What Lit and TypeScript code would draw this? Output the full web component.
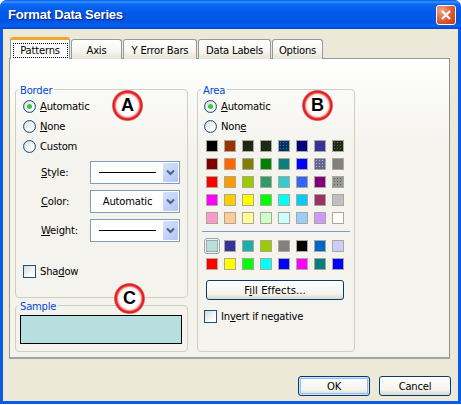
import { LitElement, html, css } from "lit";
import { customElement } from "lit/decorators.js";

type Sw = [string, string?];
const PALETTE: Sw[] = [
  ["#000000"], ["#993300"], ["#1c2a14"], ["#1c2a14"], ["#003366", "dots-blue"], ["#000080"], ["#333399"], ["#1c2a14", "dots-grey"],
  ["#800000"], ["#ff6600"], ["#808000"], ["#008000"], ["#008080", "dots-dark"], ["#0000ff"], ["#666699", "dots-light"], ["#808080"],
  ["#ff0000"], ["#ff9900"], ["#99cc00"], ["#339966"], ["#33cccc"], ["#3366ff"], ["#800080"], ["#969696", "dots-dark"],
  ["#ff00ff"], ["#ffcc00"], ["#ffff00"], ["#00ff00"], ["#00ffff"], ["#00ccff"], ["#993366"], ["#c0c0c0", "dots-light"],
  ["#ff99cc"], ["#ffcc99"], ["#ffff99"], ["#ccffcc"], ["#ccffff"], ["#99ccff"], ["#cc99ff"], ["#ffffff"],
];
const RECENT: Sw[] = [
  ["#b8dfe0", "selected"], ["#333399"], ["#008080", "dots-cyan"], ["#99cc00"], ["#808080"], ["#000000"], ["#0066cc"], ["#ccccff"],
  ["#ff0000"], ["#ffff00"], ["#00ff00"], ["#00ffff"], ["#0000ff"], ["#ff00ff"], ["#008080", "dots-dark"], ["#0000ff"],
];

@customElement("app-root")
export class AppRoot extends LitElement {
  static styles = css`
    :host {
      display: block; position: relative; width: 461px; height: 405px; background: #fff; overflow: hidden;
      font-family: "DejaVu Sans", sans-serif; font-size: 10px; letter-spacing: -0.2px; color: #000;
    }
    .window {
      box-sizing: border-box; width: 461px; height: 404px; display: flex; flex-direction: column;
      border-radius: 7px 7px 0 0; overflow: hidden; background: #0a5be8;
    }
    .titlebar {
      flex: none; height: 29px; display: flex; align-items: center; justify-content: space-between;
      padding: 0 5px 0 8px;
      background: linear-gradient(#0058e6 0, #3a93ff 2px, #0a6af2 4px, #0258e8 12px, #0055e5 22px, #0461ee 26px, #0044c8 29px);
    }
    .title {
      color: #fff; font: bold 13px "Liberation Sans", sans-serif; letter-spacing: -0.2px; text-shadow: 1px 1px 1px #0f1f7a;
    }
    .close {
      box-sizing: border-box; width: 20px; height: 20px; border: 1px solid #fff; border-radius: 3px;
      background: radial-gradient(circle at 25% 25%, #f0a488, #de5a30 55%, #c03510);
      display: flex; align-items: center; justify-content: center;
    }
    .client {
      flex: 1; margin: 0 3px 3px 3px; background: #ece9d8; padding: 8px 7px 0 6px; display: flex; flex-direction: column;
    }
    .tabs {
      display: grid; grid-template-columns: 60px 51px 74px 73px 51px; column-gap: 1px; align-items: end;
      height: 22px; margin: 0 0 -1px 1px; position: relative; z-index: 1;
    }
    .tab {
      box-sizing: border-box; height: 20px; border: 1px solid #919b9c; border-bottom: none; border-radius: 3px 3px 0 0;
      background: linear-gradient(#fff, #f6f5ef 60%, #e6e3d6);
      display: flex; align-items: center; justify-content: center; padding-top: 1px;
    }
    .tab.active {
      height: 22px; background: #fff; border: 1px solid #919b9c; border-top: 3px solid #f5a52b; border-bottom: none;
      border-radius: 3px 3px 0 0; padding: 1px 0 0 0;
    }
    .focus { outline: 1px dotted #000; padding: 0 2px; line-height: 13px; width: 49px; text-align: center; }
    .panel {
      box-sizing: border-box; width: 441px; height: 301px; border: 1px solid #919b9c;
      border-right-color: #8a9091; border-bottom: 2px solid #a0a5a5;
      background: linear-gradient(#fff 0, #fbfbf9 25px, #f4f3ee 90px);
      padding: 23px 0 0 5px; display: flex; gap: 9px; align-items: flex-start;
    }
    .col { display: flex; flex-direction: column; }
    fieldset {
      box-sizing: border-box; margin: 0; padding: 0; min-width: 0; border: 1px solid #d0d0bf; border-radius: 4px;
      display: flex; flex-direction: column;
    }
    legend { padding: 0 2px; color: #0046d5; line-height: 17px; height: 14px; }
    .border-group { width: 173px; height: 216px; padding-left: 7px; }
    .border-group legend { margin-left: -5px; }
    .sample-group { width: 173px; height: 54px; padding: 0 5px 0 4px; }
    .sample-group legend { margin-left: -2px; }
    .area-group { width: 158px; height: 270px; padding-left: 6px; }
    .area-group legend { margin-left: -3px; }
    .sample { box-sizing: border-box; height: 29px; margin-top: 3px; border: 1px solid #000; background: #b8dfe0; }
    .opt { display: flex; align-items: center; gap: 4px; height: 20px; }
    .radio {
      box-sizing: border-box; width: 13px; height: 13px; border: 1px solid #1c5180; border-radius: 50%;
      background: linear-gradient(135deg, #dcdcd7, #fff 75%); display: flex; align-items: center; justify-content: center;
      box-shadow: inset 0 0 0 0.5px #c8d4dc;
    }
    .radio.on::after { content: ""; width: 5px; height: 5px; border-radius: 50%; background: #43c343; }
    .check {
      box-sizing: border-box; width: 13px; height: 13px; border: 1px solid #1c5180;
      background: linear-gradient(135deg, #d8d8d2, #fff 75%);
    }
    .fields { margin-top: 5px; padding-left: 18px; display: flex; flex-direction: column; gap: 6px; }
    .field { display: flex; align-items: center; }
    .field label { width: 49px; flex: none; }
    .select {
      box-sizing: border-box; width: 90px; height: 23px; border: 1px solid #7f9db9; background: #fff;
      display: flex; align-items: center; padding: 1px;
    }
    .select .val { flex: 1; text-align: center; }
    .select .line { flex: 1; height: 1px; background: #000; margin: 0 7px; }
    .arrow {
      box-sizing: border-box; width: 15px; height: 19px; flex: none; background: linear-gradient(135deg, #d6e2fb, #b2c6f3);
      border-radius: 1px; display: flex; align-items: center; justify-content: center;
    }
    .shadow-row { margin-top: 19px; }
    .swatches { display: grid; grid-template-columns: repeat(8, 12px); gap: 6px; margin-left: 2px; }
    .swatches.first { margin-top: 4px; }
    .sep { height: 1px; background: #7a9dd3; margin: 7px 5px 8px -2px; width: 148px; }
    .sw { box-sizing: border-box; width: 12px; height: 12px; border: 1px solid #aca899; position: relative; }
    .selected::before {
      content: ""; position: absolute; inset: -3px; border: 1px solid #8fa6c4; border-radius: 3px;
    }
    .dots-blue { background-image: radial-gradient(#2d6fa0 0.6px, transparent 0.8px); background-size: 3px 3px; }
    .dots-grey { background-image: radial-gradient(#5f6f50 0.6px, transparent 0.8px); background-size: 3px 3px; }
    .dots-dark { background-image: radial-gradient(#3f6f70 0.7px, transparent 0.9px); background-size: 3px 3px; }
    .dots-light { background-image: radial-gradient(#b8b8c8 0.6px, transparent 0.8px); background-size: 3px 3px; }
    .dots-cyan { background-image: radial-gradient(#3ce0e0 0.6px, transparent 0.8px); background-size: 2px 2px; }
    .xpbtn {
      box-sizing: border-box; display: flex; align-items: center; justify-content: center; height: 20px;
      border: 1px solid #003c74; border-radius: 3px; background: linear-gradient(#fff, #f5f4ee 70%, #dcd8cc);
    }
    .fill { width: 138px; margin: 10px 0 0 2px; letter-spacing: 0.1px; }
    .invert { margin-top: 6px; }
    .footer { display: flex; justify-content: flex-end; gap: 9px; margin-top: 17px; }
    .footer .xpbtn { width: 72px; }
    .default { box-shadow: inset 0 0 0 1px #cee7ff, inset 0 0 0 2px #98b8ea; }
    .badge {
      position: absolute; box-sizing: border-box; width: 31px; height: 31px; border-radius: 50%;
      background: radial-gradient(circle closest-side, #fff 0, #fff 60%, #f8dcdc 72%, #e63030 84%, #dc1c1c 92%, #ec8080 100%);
      display: flex; align-items: center; justify-content: center;
      font: bold 18px "Liberation Sans", sans-serif; letter-spacing: 0; color: #000;
    }
    .a { left: 112px; top: 90px; }
    .b { left: 302px; top: 90px; }
    .c { left: 114px; top: 283px; }
  `;

  private swatches(items: Sw[], first = false) {
    return html`<div class="swatches ${first ? "first" : ""}">
      ${items.map(([c, k]) => html`<div class="sw ${k ?? ""}" style="background-color:${c}"></div>`)}
    </div>`;
  }

  private arrow() {
    return html`<span class="arrow"><svg width="9" height="7" viewBox="0 0 9 7"><path d="M1 1.5 4.5 5 8 1.5" fill="none" stroke="#4d6185" stroke-width="2"/></svg></span>`;
  }

  render() {
    return html`
      <div class="window">
        <div class="titlebar">
          <span class="title">Format Data Series</span>
          <span class="close"><svg width="12" height="12" viewBox="0 0 12 12"><path d="M2 2 10 10M10 2 2 10" stroke="#fff" stroke-width="2.2"/></svg></span>
        </div>
        <div class="client">
          <div class="tabs">
            <div class="tab active"><span class="focus">Patterns</span></div>
            <div class="tab">Axis</div>
            <div class="tab">Y Error Bars</div>
            <div class="tab">Data Labels</div>
            <div class="tab">Options</div>
          </div>
          <div class="panel">
            <div class="col">
              <fieldset class="border-group">
                <legend>Border</legend>
                <div class="opt"><span class="radio on"></span><span><u>A</u>utomatic</span></div>
                <div class="opt"><span class="radio"></span><span><u>N</u>one</span></div>
                <div class="opt"><span class="radio"></span><span>Custom</span></div>
                <div class="fields">
                  <div class="field"><label><u>S</u>tyle:</label><div class="select"><span class="line"></span>${this.arrow()}</div></div>
                  <div class="field"><label><u>C</u>olor:</label><div class="select"><span class="val">Automatic</span>${this.arrow()}</div></div>
                  <div class="field"><label><u>W</u>eight:</label><div class="select"><span class="line"></span>${this.arrow()}</div></div>
                </div>
                <div class="opt shadow-row"><span class="check"></span><span>Sha<u>d</u>ow</span></div>
              </fieldset>
              <fieldset class="sample-group">
                <legend>Sample</legend>
                <div class="sample"></div>
              </fieldset>
            </div>
            <fieldset class="area-group">
              <legend>Area</legend>
              <div class="opt"><span class="radio on"></span><span><u>A</u>utomatic</span></div>
              <div class="opt"><span class="radio"></span><span>Non<u>e</u></span></div>
              ${this.swatches(PALETTE, true)}
              <div class="sep"></div>
              ${this.swatches(RECENT)}
              <div class="xpbtn fill"><span>F<u>i</u>ll Effects...</span></div>
              <div class="opt invert"><span class="check"></span><span>In<u>v</u>ert if negative</span></div>
            </fieldset>
          </div>
          <div class="footer">
            <div class="xpbtn default">OK</div>
            <div class="xpbtn">Cancel</div>
          </div>
        </div>
      </div>
      <div class="badge a">A</div>
      <div class="badge b">B</div>
      <div class="badge c">C</div>
    `;
  }
}
